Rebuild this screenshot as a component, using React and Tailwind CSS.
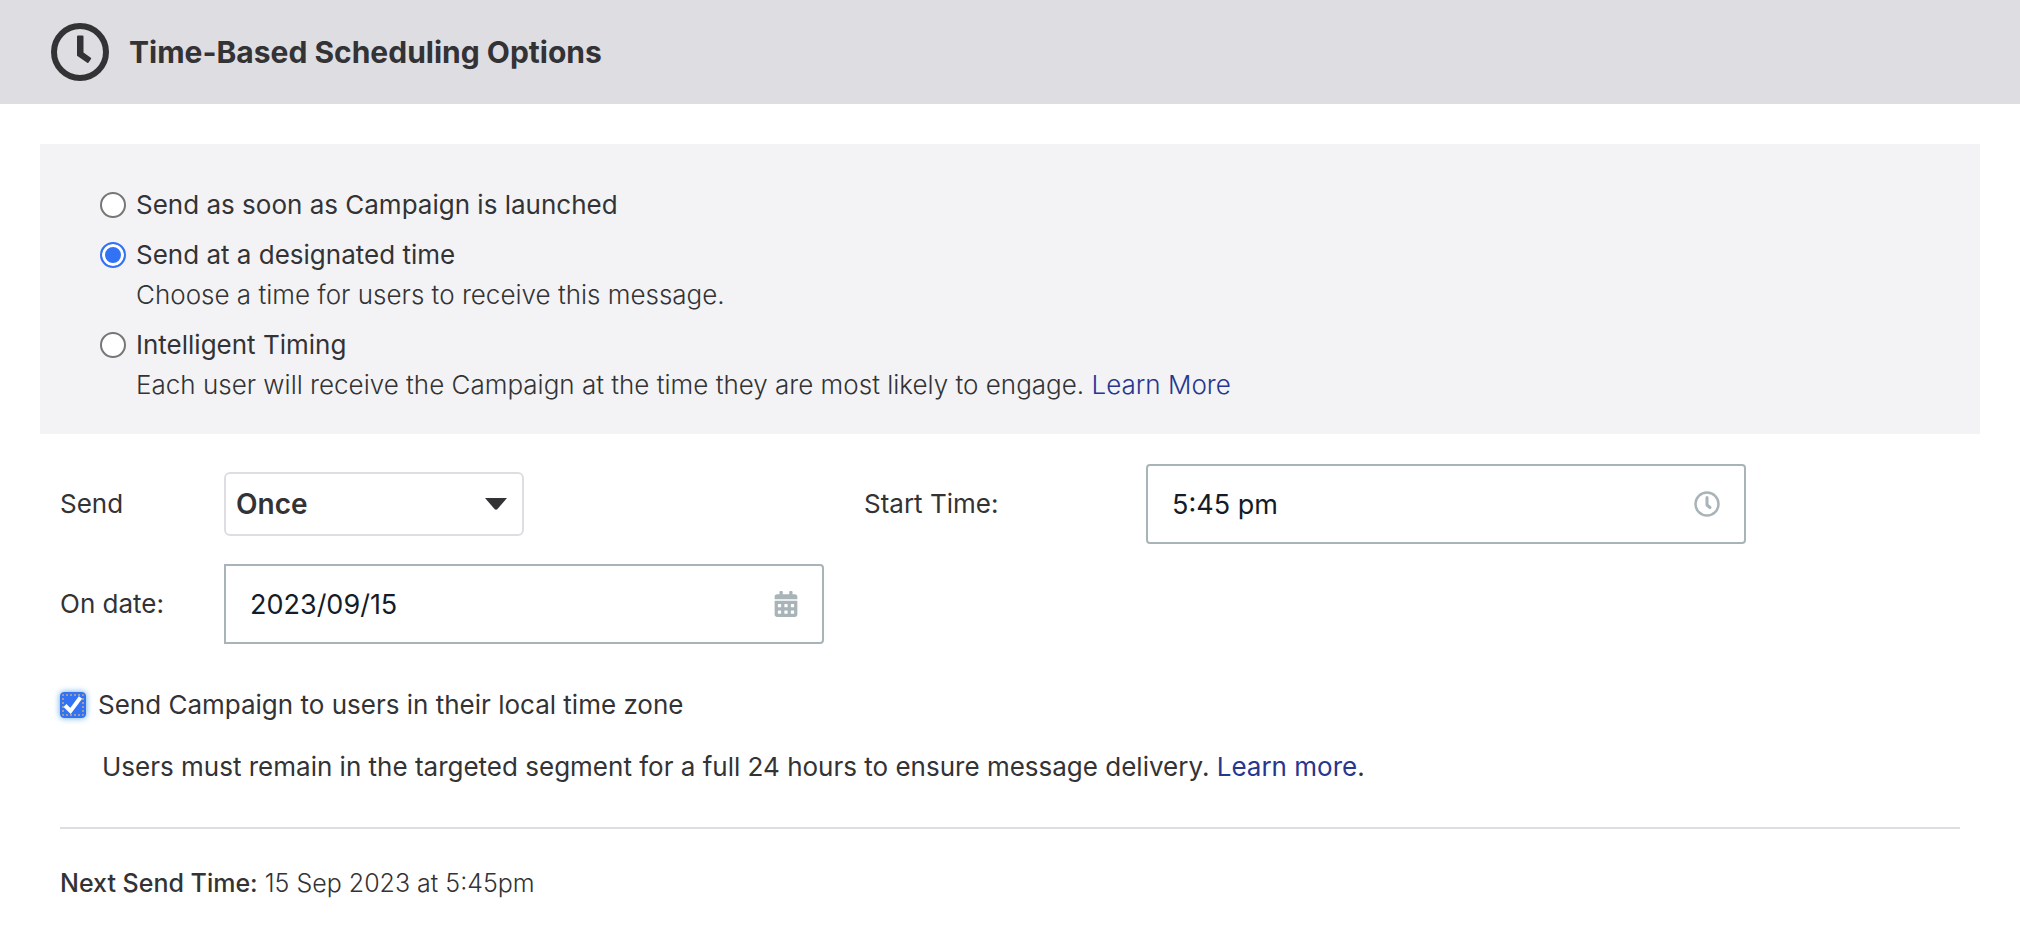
const linkClass = "text-[#27368f] no-underline hover:underline";

function HeaderClock() {
  return (
    <svg className="size-[58px] shrink-0" viewBox="0 0 58 58" fill="none" stroke="currentColor" aria-hidden="true">
      <circle cx="29" cy="29" r="26" strokeWidth="6" />
      <path
        d="M27 12.5h4.500a1 1 0 0 1 1 1V29.500l7.300 5.200a1 1 0 0 1 .2 1.400l-2.400 3.400a1 1 0 0 1-1.400 .2L26.400 33a1 1 0 0 1-.4-.8V13.500a1 1 0 0 1 1-1Z"
        fill="currentColor"
        stroke="none"
      />
    </svg>
  );
}

function FieldClock() {
  return (
    <svg className="size-[26px]" viewBox="0 0 26 26" fill="none" stroke="currentColor" aria-hidden="true">
      <circle cx="13" cy="13" r="11.5" strokeWidth="2.5" />
      <path d="M13 6.5V14L16 16.500" strokeWidth="3" strokeLinecap="round" strokeLinejoin="round" />
    </svg>
  );
}

function CalendarIcon() {
  return (
    <svg className="h-[26px] w-[24px]" viewBox="0 0 448 512" fill="currentColor" aria-hidden="true">
      <path d="M0 464c0 26.500 21.500 48 48 48h352c26.500 0 48-21.500 48-48V192H0v272zm320-196c0-6.600 5.400-12 12-12h40c6.600 0 12 5.400 12 12v40c0 6.600-5.400 12-12 12h-40c-6.600 0-12-5.400-12-12v-40zm0 128c0-6.600 5.400-12 12-12h40c6.600 0 12 5.400 12 12v40c0 6.600-5.400 12-12 12h-40c-6.600 0-12-5.400-12-12v-40zM192 268c0-6.600 5.400-12 12-12h40c6.600 0 12 5.400 12 12v40c0 6.600-5.400 12-12 12h-40c-6.600 0-12-5.400-12-12v-40zm0 128c0-6.600 5.400-12 12-12h40c6.600 0 12 5.400 12 12v40c0 6.600-5.400 12-12 12h-40c-6.600 0-12-5.400-12-12v-40zM64 268c0-6.600 5.400-12 12-12h40c6.600 0 12 5.400 12 12v40c0 6.600-5.400 12-12 12H76c-6.600 0-12-5.400-12-12v-40zm0 128c0-6.600 5.400-12 12-12h40c6.600 0 12 5.400 12 12v40c0 6.600-5.400 12-12 12H76c-6.600 0-12-5.400-12-12v-40zM400 64h-48V16c0-8.800-7.200-16-16-16h-32c-8.800 0-16 7.200-16 16v48H160V16c0-8.800-7.200-16-16-16h-32c-8.800 0-16 7.200-16 16v48H48C21.500 64 0 85.500 0 112v48h448v-48c0-26.500-21.500-48-48-48z" />
    </svg>
  );
}

function RadioOption({ id, label, defaultChecked, children }) {
  return (
    <div>
      <div className="flex h-10 items-center gap-[10px]">
        <input
          id={id}
          type="radio"
          name="schedule"
          defaultChecked={defaultChecked}
          className="size-[26px] shrink-0 appearance-none rounded-full border-2 border-[#767676] bg-white checked:border-[#3273f6] checked:bg-[#3273f6] checked:shadow-[inset_0_0_0_3px_white]"
        />
        <label htmlFor={id}>{label}</label>
      </div>
      {children && <p className="pl-9 leading-10 font-light">{children}</p>}
    </div>
  );
}

function IconField({ id, label, value, icon, labelClass, corners }) {
  return (
    <div className="flex items-center">
      <label htmlFor={id} className={`shrink-0 ${labelClass}`}>{label}</label>
      <div className={`flex h-20 w-[600px] items-center border-2 border-[#a9b4b9] pr-6 pl-6 text-[#a9b4b9] ${corners}`}>
        <input id={id} type="text" defaultValue={value} className="h-full min-w-0 flex-1 bg-transparent text-[27px] text-[#141c28] outline-none" />
        {icon}
      </div>
    </div>
  );
}

export default function App() {
  return (
    <main className="min-h-screen bg-white font-['Inter',sans-serif] text-[26px] leading-10 text-[#333335]">
      <header className="flex h-[104px] items-center gap-5 bg-[#dedde2] px-[51px]">
        <HeaderClock />
        <h1 className="text-[30px] font-bold">Time-Based Scheduling Options</h1>
      </header>

      <div role="radiogroup" aria-label="Schedule" className="mx-10 mt-10 flex flex-col gap-[10px] bg-[#f3f3f5] px-[60px] pt-[41px] pb-[29px]">
        <RadioOption id="asap" label="Send as soon as Campaign is launched" />
        <RadioOption id="designated" label="Send at a designated time" defaultChecked>
          Choose a time for users to receive this message.
        </RadioOption>
        <RadioOption id="intelligent" label="Intelligent Timing">
          Each user will receive the Campaign at the time they are most likely to engage.{" "}
          <a href="#intelligent-timing" className={linkClass}>Learn More</a>
        </RadioOption>
      </div>

      <div className="px-[60px] pt-[30px]">
        <div className="flex items-center">
          <div className="flex w-[804px] items-center">
            <label htmlFor="frequency" className="w-[164px] shrink-0">Send</label>
            <div className="grid w-[300px] items-center">
              <select
                id="frequency"
                defaultValue="Once"
                className="col-start-1 row-start-1 h-16 appearance-none rounded-md border-2 border-[#dedde2] bg-white px-[10px] text-[28px] font-semibold"
              >
                <option>Once</option>
                <option>Daily</option>
                <option>Weekly</option>
                <option>Monthly</option>
              </select>
              <svg className="pointer-events-none col-start-1 row-start-1 mr-[17px] h-3 w-[22px] justify-self-end" viewBox="0 0 22 12" fill="currentColor" aria-hidden="true">
                <path d="M0 0h22L12.500 11Q11 12.500 9.500 11Z" />
              </svg>
            </div>
          </div>
          <IconField id="start-time" label="Start Time:" value="5:45 pm" icon={<FieldClock />} labelClass="w-[282px]" corners="rounded" />
        </div>

        <div className="mt-5">
          <IconField id="date" label="On date:" value="2023/09/15" icon={<CalendarIcon />} labelClass="w-[164px]" corners="rounded-r" />
        </div>

        <div className="mt-[41px] flex h-10 items-center gap-3">
          <span className="grid size-[26px] shrink-0">
            <input
              id="local-zone"
              type="checkbox"
              defaultChecked
              className="peer col-start-1 row-start-1 size-[26px] appearance-none rounded-[4px] border border-[#767676] bg-white outline-2 -outline-offset-4 outline-dotted outline-[#a39d98] checked:border-[#3273f6] checked:bg-[#3273f6] checked:shadow-[0_0_6px_#62a8e0]"
            />
            <svg className="pointer-events-none invisible col-start-1 row-start-1 size-[26px] peer-checked:visible" viewBox="0 0 26 26" fill="none" stroke="white" strokeWidth="4" aria-hidden="true">
              <path d="M5 13.500L10.500 19L20.500 5.500" />
            </svg>
          </span>
          <label htmlFor="local-zone">Send Campaign to users in their local time zone</label>
        </div>

        <p className="mt-[22px] pl-[42px]">
          Users must remain in the targeted segment for a full 24 hours to ensure message delivery.{" "}
          <a href="#local-time" className={linkClass}>Learn more</a>.
        </p>

        <hr className="mt-10 border-t-2 border-[#dedde2]" />

        <p className="mt-[34px] text-[25px] font-light">
          <strong className="font-medium">Next Send Time:</strong> 15 Sep 2023 at 5:45pm
        </p>
      </div>
    </main>
  );
}
